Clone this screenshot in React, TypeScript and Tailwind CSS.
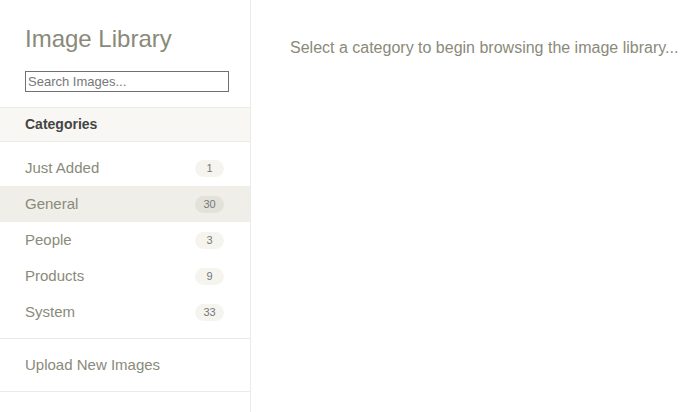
import React from "react";

const categories = [
  { name: "Just Added", count: 1 },
  { name: "General", count: 30, active: true },
  { name: "People", count: 3 },
  { name: "Products", count: 9 },
  { name: "System", count: 33 },
];

export default function App() {
  return (
    <div className="flex h-[412px] w-[694px] bg-white font-['Liberation_Sans',Arial,sans-serif] text-[#8a8a7a]">
      <aside className="flex w-[251px] shrink-0 flex-col border-r border-[#ebebe6]">
        <h1 className="px-[25px] pt-[25px] text-[24px] leading-[28px] text-[#8a8a7a]">Image Library</h1>
        <div className="px-[25px] pt-[16px] pb-[14px]">
          <input
            className="h-[21px] w-[204px] border border-[#707070] px-[2px] text-[13px] text-[#555] placeholder:text-[#777] outline-none"
            placeholder="Search Images..."
          />
        </div>
        <div className="flex h-[35px] items-center border-y border-[#ebebe6] bg-[#f8f7f3] px-[25px] text-[14px] font-bold text-[#444]">
          Categories
        </div>
        <ul className="border-b border-[#ebebe6] py-[8px]">
          {categories.map((c) => (
            <li
              key={c.name}
              className={`flex h-[36px] items-center justify-between pl-[25px] pr-[26px] text-[15px] ${
                c.active ? "bg-[#efeee9]" : ""
              }`}
            >
              <span>{c.name}</span>
              <span
                className={`flex h-[17px] w-[29px] items-center justify-center rounded-full text-[11px] text-[#777] ${
                  c.active ? "bg-[#e3e2da]" : "bg-[#f5f4ef]"
                }`}
              >
                {c.count}
              </span>
            </li>
          ))}
        </ul>
        <div className="flex h-[53px] items-center border-b border-[#ebebe6] px-[25px] text-[15px]">
          Upload New Images
        </div>
      </aside>
      <main className="flex-1 pl-[39px] pt-[39px]">
        <p className="text-[16px] leading-[18px]">Select a category to begin browsing the image library...</p>
      </main>
    </div>
  );
}
